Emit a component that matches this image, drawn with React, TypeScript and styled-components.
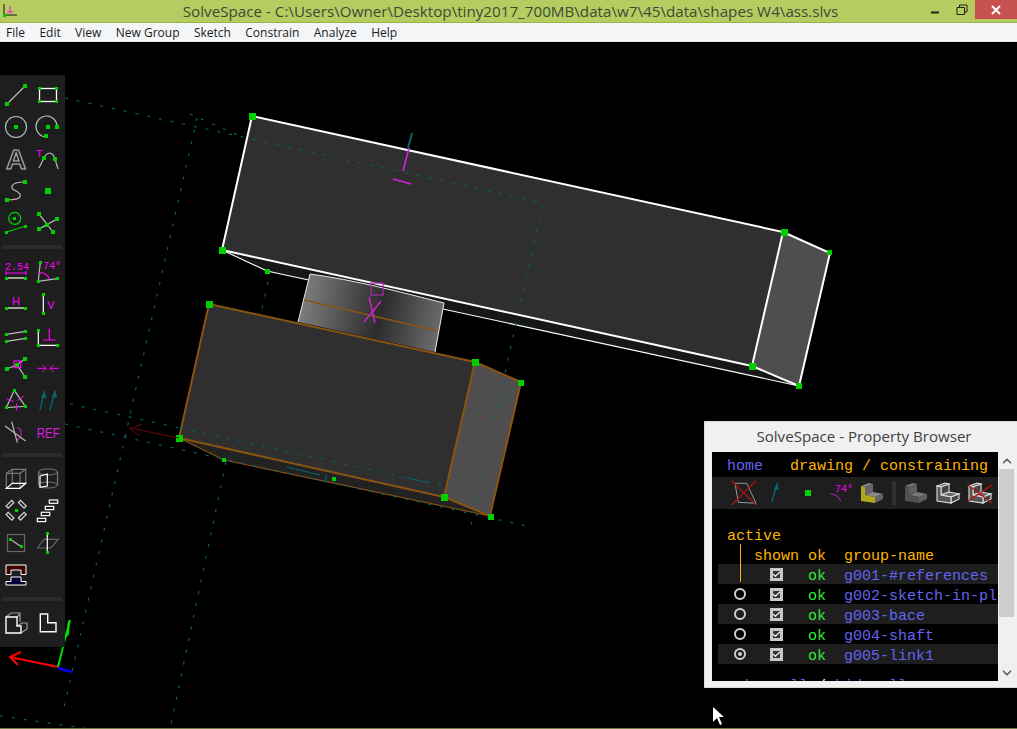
import * as React from 'react';
import styled, { createGlobalStyle } from 'styled-components';
import { ChevronDown, ChevronUp, Check } from 'lucide-react';

const GREEN = '#00d000';
const MAGENTA = '#ff00ff';
const TEAL = '#07666c';
const DASH = '#066064';
const GREY = '#b8b8b8';
const BROWN = '#8a5410';
const BLUE = '#6464f0';
const ORANGE = '#ffb400';

const GlobalStyle = createGlobalStyle`
  html, body {
    margin: 0;
    padding: 0;
    background: #000;
    overflow: hidden;
  }
`;

const Page = styled.div`
  width: 1017px;
  height: 729px;
  display: flex;
  flex-direction: column;
  overflow: hidden;
  background: #000;
`;

const TitleBar = styled.div`
  height: 22px;
  flex: none;
  display: grid;
  grid-template-columns: 1fr auto 1fr;
  background: #b6cc60;
  border-bottom: 1px solid #9db24e;
`;

const AppIcon = styled.svg`
  display: block;
  width: 20px;
  height: 22px;
`;

const Title = styled.div`
  padding-left: 4px;
  font: 15.2px/22px 'Open Sans', sans-serif;
  color: #3c4a38;
  white-space: nowrap;
`;

const WindowButtons = styled.div`
  display: flex;
  justify-content: flex-end;
  align-items: flex-start;
`;

const WindowButton = styled.div<{ $close?: boolean }>`
  width: ${(p) => (p.$close ? 42 : 27)}px;
  height: 19px;
  display: flex;
  align-items: center;
  justify-content: center;
  background: ${(p) => (p.$close ? '#c75050' : 'transparent')};
`;

const MenuBar = styled.div`
  height: 17px;
  flex: none;
  display: flex;
  gap: 14.4px;
  padding: 0 0 1px 6px;
  background: #f4f5f7;
  border-bottom: 1px solid #e6e6e6;
`;

const MenuItem = styled.span`
  font: 12px/19px 'Open Sans', sans-serif;
  color: #1c1c1c;
  white-space: nowrap;
`;

const Viewport = styled.div`
  position: relative;
  flex: 1;
  min-height: 0;
  overflow: hidden;
`;

const Scene = styled.svg`
  display: block;
  width: 100%;
  height: 100%;
`;

const BottomEdge = styled.div`
  height: 1px;
  flex: none;
  background: #6f7a48;
`;

const ToolPanel = styled.div`
  position: absolute;
  left: 0;
  top: 33px;
  width: 65px;
  padding: 4px 0 8px;
  background: #1e1e1e;
`;

const ToolGroup = styled.div<{ $tail?: number }>`
  display: grid;
  grid-template-columns: 32px 32px;
  grid-auto-rows: 32px;
  padding-bottom: ${(p) => p.$tail ?? 0}px;
`;

const ToolSeparator = styled.div<{ $tight?: boolean }>`
  height: 4px;
  margin: 6px 3px ${(p) => (p.$tight ? 5 : 6)}px;
  background: #2c2c2c;
`;

const IconCell = styled.svg.attrs({ viewBox: '0 0 32 32' })`
  display: block;
  width: 32px;
  height: 32px;
  flex: none;
  fill: none;
`;

const IconText = styled.text<{ $size?: number; $sans?: boolean; $dim?: boolean }>`
  font-family: ${(p) => (p.$sans ? "'Liberation Sans'" : "'Liberation Mono'")}, sans-serif;
  font-size: ${(p) => p.$size ?? 10}px;
  fill: ${(p) => (p.$dim ? '#d820d8' : MAGENTA)};
`;

const BrowserWindow = styled.div`
  position: absolute;
  left: 704px;
  top: 379px;
  width: 318px;
  height: 267px;
  box-sizing: border-box;
  padding: 0 5px 6px 7px;
  display: flex;
  flex-direction: column;
  background: #f0f0f0;
  border: 1px solid #d8d8d8;
`;

const BrowserTitle = styled.div`
  height: 30px;
  flex: none;
  text-align: center;
  font: 15.1px/29px 'Open Sans', sans-serif;
  color: #3f3f3f;
  white-space: nowrap;
`;

const BrowserClient = styled.div`
  flex: 1;
  min-height: 0;
  display: flex;
  background: #000;
`;

const BrowserPane = styled.div`
  flex: 1;
  min-width: 0;
  overflow: hidden;
  padding-top: 5px;
  font: 15px/20px 'Liberation Mono', monospace;
  white-space: pre;
`;

const NavRow = styled.div`
  height: 20px;
  padding-left: 15px;
  color: ${ORANGE};
`;

const Blue = styled.span`
  color: ${BLUE};
`;

const White = styled.span`
  color: #fff;
`;

const IconStrip = styled.div`
  height: 32px;
  padding-left: 16px;
  display: flex;
  align-items: center;
  background: #1e1e1e;
`;

const StripSeparator = styled.div`
  width: 4px;
  height: 24px;
  margin: 0 4px;
  background: #303030;
`;

const ActiveLabel = styled.div`
  height: 20px;
  box-sizing: border-box;
  margin-top: 15px;
  padding: 3px 0 0 15px;
  color: ${ORANGE};
`;

const GroupTable = styled.div`
  position: relative;
`;

const TreeLine = styled.div`
  position: absolute;
  left: 28px;
  top: 0;
  width: 1px;
  height: 38px;
  background: ${ORANGE};
`;

const GroupRow = styled.div<{ $striped?: boolean; $header?: boolean }>`
  height: 20px;
  margin-left: 6px;
  display: grid;
  grid-template-columns: 36px 54px 36px 1fr;
  grid-template-rows: 20px;
  align-items: start;
  background: ${(p) => (p.$striped ? '#1e1e1e' : 'transparent')};
  color: ${(p) => (p.$header ? ORANGE : BLUE)};
`;

const Cell = styled.div`
  padding-top: 3px;
`;

const OkCell = styled(Cell)`
  color: #33ee33;
`;

const RadioCell = styled.div`
  align-self: center;
  display: flex;
  justify-content: center;
  padding-left: 8px;
`;

const ShownCell = styled.div`
  align-self: center;
  display: flex;
  justify-content: center;
  padding-right: 10px;
`;

const Radio = styled.span<{ $on?: boolean }>`
  width: 12px;
  height: 12px;
  box-sizing: border-box;
  display: flex;
  align-items: center;
  justify-content: center;
  border: 2px solid #d0d0d0;
  border-radius: 50%;

  &::after {
    content: '';
    width: 4px;
    height: 4px;
    border-radius: 50%;
    background: ${(p) => (p.$on ? '#d0d0d0' : 'transparent')};
  }
`;

const CheckBox = styled.span`
  width: 13px;
  height: 13px;
  box-sizing: border-box;
  display: flex;
  align-items: center;
  justify-content: center;
  border: 3px solid #c8c8c8;
  background: #333;
  color: #f0f0f0;

  svg {
    flex: none;
  }
`;

const ShowHideRow = styled.div`
  margin-top: 13px;
  padding-left: 24px;
  color: ${BLUE};
`;

const ScrollBar = styled.div`
  width: 18px;
  flex: none;
  display: flex;
  flex-direction: column;
  background: #f0f0f0;
  color: #606060;
`;

const ScrollArrow = styled.div`
  height: 17px;
  flex: none;
  display: flex;
  align-items: center;
  justify-content: center;
`;

const ScrollThumb = styled.div`
  height: 148px;
  margin: 0 2px 0 1px;
  background: #cdcdcd;
`;

const ScrollRest = styled.div`
  flex: 1;
`;

const Dot = ({ x, y, s = 4 }: { x: number; y: number; s?: number }) => (
  <rect x={x - s / 2} y={y - s / 2} width={s} height={s} fill={GREEN} shapeRendering="crispEdges" />
);

const Seg = ({ d, c = GREY, w = 1.2 }: { d: string; c?: string; w?: number }) => (
  <path d={d} stroke={c} strokeWidth={w} fill="none" />
);

const toolIconsA = [
  <>
    <Seg d="M7 25L25 7" />
    <Dot x={7} y={25} />
    <Dot x={25} y={7} />
  </>,
  <>
    <rect x={7.5} y={9.5} width={17} height={13} stroke="#fff" strokeWidth={1.3} />
    <Dot x={7.5} y={9.5} s={3} />
    <Dot x={24.5} y={9.5} s={3} />
    <Dot x={7.5} y={22.5} s={3} />
    <Dot x={24.5} y={22.5} s={3} />
  </>,
  <>
    <circle cx={16} cy={16} r={10.5} stroke={GREY} strokeWidth={1.2} />
    <Dot x={16} y={16} />
  </>,
  <>
    <Seg d="M14 26A10.5 10.5 0 1 1 25 16" />
    <Dot x={16} y={16} />
    <Dot x={25} y={16} />
    <Dot x={14} y={25} />
  </>,
  <text x={16} y={26} textAnchor="middle" fontFamily="'Liberation Sans', sans-serif" fontWeight="bold" fontSize={28} fill="#1e1e1e" stroke={GREY} strokeWidth={1.1}>A</text>,
  <>
    <IconText x={4} y={14} $size={11}>T</IconText>
    <Seg d="M7 25L12 15C14 10 20 7 23 16L26 26" />
    <Dot x={12} y={15} />
    <Dot x={23} y={16} />
  </>,
  <>
    <Seg d="M7 25C14 25 22 24 20 19C18 15 10 16 12 11C13 8 20 7 25 7" />
    <Dot x={7} y={25} />
    <Dot x={25} y={7} />
  </>,
  <Dot x={16} y={16} s={6} />,
  <>
    <circle cx={14.7} cy={11.3} r={6} stroke={GREEN} strokeWidth={1.2} />
    <Seg d="M6.7 25L25.7 19" c={GREEN} />
    <Dot x={14.7} y={11.3} s={3} />
    <Dot x={6.7} y={25} s={3} />
    <Dot x={25.7} y={19} s={3} />
  </>,
  <>
    <Seg d="M7 7L21 25M7 22L25 12" c="#d0d0d0" />
    <Dot x={7} y={7} />
    <Dot x={25} y={12} />
    <Dot x={7} y={22} />
    <Dot x={21} y={25} />
    <Dot x={15} y={18} />
  </>,
];

const toolIconsB = [
  <>
    <IconText x={5} y={15.5} $size={10}>2.54</IconText>
    <Seg d="M6 17V21M6 19H26M26 17V21" c={MAGENTA} />
    <Seg d="M6 24H26" c="#fff" />
    <Dot x={6.3} y={24} s={3} />
    <Dot x={25.7} y={24} s={3} />
  </>,
  <>
    <Seg d="M8.3 8.3L6.3 27.3L25.3 24.7" />
    <Seg d="M7.3 18.7C12 18.7 16 21 17.3 25" c={MAGENTA} />
    <IconText x={11} y={15} $size={10}>74°</IconText>
    <Dot x={8.3} y={8.3} s={3} />
    <Dot x={6.3} y={27.3} s={3} />
    <Dot x={25.3} y={24.7} s={3} />
  </>,
  <>
    <IconText x={16} y={19} $size={11} $sans textAnchor="middle">H</IconText>
    <Seg d="M6 22H26" c="#fff" />
    <Dot x={6.3} y={22} s={3} />
    <Dot x={25.7} y={22} s={3} />
  </>,
  <>
    <Seg d="M11.3 8V27" c="#fff" />
    <IconText x={19} y={23} $size={11} $sans textAnchor="middle">V</IconText>
    <Dot x={11.3} y={8} s={3} />
    <Dot x={11.3} y={27} s={3} />
  </>,
  <>
    <Seg d="M6.3 16.3L25.7 13.3M6.3 23.3L25.7 20.3" />
    <Dot x={6.3} y={16.3} s={3} />
    <Dot x={25.7} y={13.3} s={3} />
    <Dot x={6.3} y={23.3} s={3} />
    <Dot x={25.7} y={20.3} s={3} />
  </>,
  <>
    <Seg d="M6.3 12.3V27.3H25.3" c="#fff" />
    <Seg d="M17.3 10.7V22M11.3 22H23.7" c={MAGENTA} />
    <Dot x={6.3} y={12.3} s={3} />
    <Dot x={6.3} y={27.3} s={3} />
    <Dot x={25.3} y={27.3} s={3} />
  </>,
  <>
    <Seg d="M7 19L17 14.7L25 9M17 14.7L25 27" />
    <rect x={14} y={11} width={6.7} height={6.7} stroke={MAGENTA} strokeWidth={1.2} />
    <Dot x={17} y={14.7} />
    <Dot x={7} y={19} />
    <Dot x={25} y={9} />
    <Dot x={25} y={27} />
  </>,
  <Seg d="M5 18.3H14M10.5 14.8L14 18.3L10.5 21.8M27 18.3H18M21.5 14.8L18 18.3L21.5 21.8" c={MAGENTA} w={1} />,
  <>
    <Seg d="M14.3 8.3L6.3 25.7L25.3 24.3Z" />
    <Seg d="M6.5 16.5L13.5 19.5M17.5 18.5L24 14M16.5 21.5V28.5" c={MAGENTA} w={1} />
    <Dot x={14.3} y={8.3} s={3} />
    <Dot x={6.3} y={25.7} s={3} />
    <Dot x={25.3} y={24.3} s={3} />
  </>,
  <>
    <Seg d="M8 28.3L12.3 9M18 28.3L23 8.3" c={TEAL} w={1.4} />
    <path d="M12.3 9L9 16H14.5ZM23 8.3L19.7 15.5H25.2Z" fill={TEAL} />
  </>,
  <>
    <Seg d="M17.3 13.7C22 14.5 23 23 17 26" c="#a020a0" w={1.4} />
    <Seg d="M5 12L25.7 27M11.7 7.7L17.3 28.7" />
  </>,
  <IconText x={4.7} y={23.7} $size={14} $sans $dim textLength={23} lengthAdjust="spacingAndGlyphs">REF</IconText>,
];

const toolIconsC = [
  <>
    <Seg d="M6.3 10.3V25.3M6.3 10.3H20V25.3M6.3 10.3L12.3 6.3H25.7V20.3L20 25.3M20 10.3L25.7 6.3M12.3 6.3V20.3" c="#777" />
    <path d="M6.3 25.3H20L25.7 20.3H12.3Z" stroke="#fff" strokeWidth={1.2} />
  </>,
  <>
    <ellipse cx={16} cy={9} rx={9.5} ry={3} stroke="#777" />
    <ellipse cx={16} cy={22} rx={9.5} ry={3} stroke="#777" />
    <Seg d="M6.5 9V22M25.5 9V22" c="#777" />
    <path d="M8 13L15.3 11V23L8 24.3Z" stroke="#fff" strokeWidth={1.2} />
  </>,
  <>
    <g stroke="#d8d8d8" strokeWidth={1.2}>
      <rect x={6} y={7.8} width={8} height={3} transform="rotate(-45 10 9.3)" />
      <rect x={18.3} y={7.8} width={8} height={3} transform="rotate(45 22.3 9.3)" />
      <rect x={6} y={19.8} width={8} height={3} transform="rotate(45 10 21.3)" />
      <rect x={18.3} y={19.8} width={8} height={3} transform="rotate(-45 22.3 21.3)" />
    </g>
    <Dot x={16.3} y={15.3} s={3} />
  </>,
  <g stroke="#fff" strokeWidth={1.2}>
    <rect x={17.3} y={5} width={8.4} height={3.3} />
    <rect x={13.3} y={11.3} width={8.4} height={3.3} />
    <rect x={9.3} y={17.3} width={8.4} height={3.3} />
    <rect x={5.3} y={23.3} width={8.4} height={3.3} />
  </g>,
  <>
    <rect x={7.5} y={7.5} width={17} height={17} stroke="#666" strokeWidth={1.2} />
    <Seg d="M10.3 12.3L21.3 19.7" />
    <Dot x={10.3} y={12.3} s={3} />
    <Dot x={21.3} y={19.7} s={3} />
  </>,
  <>
    <path d="M5.3 21L12 12.3H26.3L18.7 21Z" stroke="#666" strokeWidth={1.2} />
    <Seg d="M15.3 6.3V25.3" c="#fff" />
    <Dot x={15.3} y={6.3} s={3} />
    <Dot x={15.3} y={25.3} s={3} />
  </>,
  <>
    <path d="M6 6H26V15.5H21V11H11V15.5H6Z" fill="#400000" stroke="#fff" strokeWidth={1} />
    <path d="M11 18H21V22.5H26V26H6V22.5H11Z" fill="#000033" stroke="#fff" strokeWidth={1} />
  </>,
];

const toolIconsD = [
  <>
    <Seg d="M6 10L11 6H20V15M17 10L20 7M17 19L22 16H27V22L21 26M27 16V22" c="#999" />
    <path d="M6 10H17V19H21V26H6Z" stroke="#fff" strokeWidth={1.4} />
  </>,
  <path d="M8.3 7H15.7V15.7H24V24.7H8.3Z" stroke="#fff" strokeWidth={1.4} />,
];

interface ISolidIconProps {
  front: string;
  top: string;
  side: string;
  line?: string;
  crossed?: boolean;
}

const SolidIcon = ({ front, top, side, line, crossed }: ISolidIconProps) => (
  <IconCell>
    <g stroke={line} strokeWidth={1.1}>
      <path d="M5 9L13 6L17 7L9 10Z" fill={top} />
      <path d="M9 10L17 7V15L9 18Z" fill={side} />
      <path d="M9 18L17 15L27 17L19 20Z" fill={top} />
      <path d="M19 20L27 17V22L19 26Z" fill={side} />
      <path d="M5 9L9 10V18L19 20V26L5 24Z" fill={front} />
    </g>
    {crossed && <Seg d="M4 24L28 8M4 8L28 26" c="#b01818" w={1.4} />}
  </IconCell>
);

const Tools = ({ icons }: { icons: React.ReactNode[] }) => (
  <>
    {icons.map((icon, i) => (
      <IconCell key={i}>{icon}</IconCell>
    ))}
  </>
);

const dashedLines = [
  'M65 98L543 203L470 530',
  'M190 114L242 137',
  'M197 118L63 712',
  'M268 282L261 313',
  'M226 462L170 729',
  'M70 404L180 428',
  'M180 428L445 486',
  'M65 424L527 526',
  'M0 716L90 729',
];

const Workspace = () => (
  <Scene viewBox="0 42 1017 686">
    <defs>
      <linearGradient id="shaft" x1="305" y1="300" x2="442" y2="330" gradientUnits="userSpaceOnUse">
        <stop offset="0" stopColor="#7a7a7a" />
        <stop offset="0.55" stopColor="#2c2c2c" />
        <stop offset="1" stopColor="#6e6e6e" />
      </linearGradient>
    </defs>

    {/* big part */}
    <path d="M222 250L267 271L799 386L752 366Z" fill="#171717" />
    <path d="M252 116L783 232L752 366L222 250Z" fill="#2f2f2f" />
    <path d="M783 232L830 253L799 386L752 366Z" fill="#4e4e4e" />
    <g stroke="#fff" fill="none" strokeWidth={2}>
      <path d="M252 116L783 232L752 366L222 250Z" />
      <path d="M783 232L830 253L799 386L752 366" />
      <path d="M222 250L267 271L799 386" strokeWidth={1.1} />
    </g>

    {/* shaft */}
    <path d="M310 274C355 280 400 292 444 303L435 352L298 322Z" fill="url(#shaft)" />
    <path d="M310 274C355 280 400 292 444 303M310 274L298 322M444 303L435 352" stroke="#e8e8e8" fill="none" />

    {/* small part */}
    <path d="M179 438L224 460L490 516L444 497Z" fill="#222" />
    <path d="M209 304L475 362L444 497L179 438Z" fill="#2f2f2f" />
    <path d="M475 362L521 382L490 516L444 497Z" fill="#4e4e4e" />
    <g stroke={BROWN} fill="none" strokeWidth={2}>
      <path d="M209 304L475 362L444 497L179 438Z" />
      <path d="M475 362L521 382L490 516L444 497" />
      <path d="M179 438L224 460L490 516" strokeWidth={1.1} />
      <path d="M304 300L438 331" strokeWidth={1.3} />
    </g>

    {/* construction lines */}
    <g stroke={DASH} strokeWidth={1.2} strokeDasharray="3 9" fill="none">
      {dashedLines.map((d) => (
        <path key={d} d={d} />
      ))}
    </g>
    <g stroke={TEAL} fill="none">
      <path d="M287 467L320 475M407 478L430 483M326 474V482" />
      <path d="M408 148L412 133" strokeWidth={2} />
    </g>

    {/* constraints */}
    <g stroke="#d820d8" fill="none" strokeWidth={1.3}>
      <path d="M409 148L403 171M393 179L411 184" strokeWidth={1.7} />
      <rect x={371} y={283} width={12} height={12} stroke="#a828a8" />
      <path d="M369 297L375 323M381 301L364 322" />
    </g>

    {/* points */}
    <g>
      <Dot x={252.5} y={116} s={7} />
      <Dot x={784} y={232} s={7} />
      <Dot x={752.5} y={366} s={7} />
      <Dot x={222} y={250} s={7} />
      <Dot x={829.5} y={252.5} s={5} />
      <Dot x={798.5} y={386} s={6} />
      <Dot x={267.5} y={271.5} s={5} />
      <Dot x={209.5} y={304.5} s={7} />
      <Dot x={475.5} y={362.5} s={7} />
      <Dot x={444.5} y={497.5} s={7} />
      <Dot x={179.5} y={438.5} s={7} />
      <Dot x={521} y={382.5} s={6} />
      <Dot x={490.5} y={516.5} s={6} />
      <Dot x={224} y={460} s={4} />
      <Dot x={334} y={479} s={4} />
    </g>

    {/* datum axes near the part and the corner triad */}
    <path d="M130 428L179 438M130 429L142 424M130 429L140 436" stroke="#6a0808" fill="none" />
    <path d="M58 667L10 657M21 652L10 657L18 665" stroke="#ff0000" strokeWidth={2} fill="none" />
    <path d="M58 667L66 635L70 620" stroke="#00e000" strokeWidth={2} fill="none" />
    <path d="M66 638L68 621L70 620L69 634Z" fill="#00e000" />
    <path d="M58 668L72 672" stroke="#0000f0" strokeWidth={2.5} />

    {/* mouse pointer */}
    <path d="M713 707V722L717 718L720 725L722 724L719 717H724Z" fill="#fff" />
  </Scene>
);

const groups = [
  { name: 'g001-#references', radio: false },
  { name: 'g002-sketch-in-pl', radio: true },
  { name: 'g003-bace', radio: true },
  { name: 'g004-shaft', radio: true },
  { name: 'g005-link1', radio: true, on: true },
];

const menus = ['File', 'Edit', 'View', 'New Group', 'Sketch', 'Constrain', 'Analyze', 'Help'];

const PropertyBrowser = () => (
  <BrowserWindow>
    <BrowserTitle>SolveSpace - Property Browser</BrowserTitle>
    <BrowserClient>
      <BrowserPane>
        <NavRow><Blue>home</Blue>{'   drawing / constraining'}</NavRow>
        <IconStrip>
          <IconCell>
            <path d="M7 6.3H18.7L28 26.3L10.3 25.3Z" stroke="#999" />
            <Seg d="M3.7 3.7L28 28M3.7 28L28 3.7" c="#a81414" w={1.3} />
          </IconCell>
          <IconCell>
            <Seg d="M11.7 25.3L17.3 6.3" c={TEAL} w={1.4} />
            <path d="M17.5 5.5L13.5 13H18.5Z" fill={TEAL} />
          </IconCell>
          <IconCell><Dot x={15.7} y={15.7} s={6} /></IconCell>
          <IconCell>
            <IconText x={11} y={15} $size={10}>74°</IconText>
            <Seg d="M6 17C11 17 16 20 16.7 24.7" c="#a020a0" />
          </IconCell>
          <SolidIcon front="#b0a818" top="#8a8a8a" side="#666" />
          <StripSeparator />
          <SolidIcon front="#505050" top="#777" side="#5e5e5e" />
          <SolidIcon front="#555" top="#666" side="#444" line="#e0e0e0" />
          <SolidIcon front="#555" top="#666" side="#444" line="#e0e0e0" crossed />
        </IconStrip>
        <ActiveLabel>active</ActiveLabel>
        <GroupTable>
          <GroupRow $header>
            <Cell />
            <Cell>shown</Cell>
            <Cell>ok</Cell>
            <Cell>group-name</Cell>
          </GroupRow>
          {groups.map((g, i) => (
            <GroupRow key={g.name} $striped={i % 2 === 0}>
              <RadioCell>{g.radio && <Radio $on={g.on} />}</RadioCell>
              <ShownCell>
                <CheckBox><Check size={9} strokeWidth={3.5} /></CheckBox>
              </ShownCell>
              <OkCell>ok</OkCell>
              <Cell>{g.name}</Cell>
            </GroupRow>
          ))}
          <TreeLine />
        </GroupTable>
        <ShowHideRow>show all <White>/</White> hide all</ShowHideRow>
      </BrowserPane>
      <ScrollBar>
        <ScrollArrow><ChevronUp size={14} strokeWidth={3} /></ScrollArrow>
        <ScrollThumb />
        <ScrollRest />
        <ScrollArrow><ChevronDown size={14} strokeWidth={3} /></ScrollArrow>
      </ScrollBar>
    </BrowserClient>
  </BrowserWindow>
);

export default function App() {
  return (
    <Page>
      <GlobalStyle />
      <TitleBar>
        <AppIcon viewBox="0 0 20 22">
          <path d="M4 4V17M4 15H17" stroke="#111" fill="none" />
          <path d="M10 6V12M7 12H13" stroke={MAGENTA} fill="none" />
          <rect x={3} y={14} width={3} height={3} fill={GREEN} />
        </AppIcon>
        <Title>SolveSpace - C:\Users\Owner\Desktop\tiny2017_700MB\data\w7\45\data\shapes W4\ass.slvs</Title>
        <WindowButtons>
          <WindowButton>
            <svg width="10" height="10" viewBox="0 0 10 10"><path d="M1 7.5H9" stroke="#1c2410" strokeWidth="2" /></svg>
          </WindowButton>
          <WindowButton>
            <svg width="12" height="12" viewBox="0 0 12 12" fill="none" stroke="#1c2410"><path d="M3.5 3V1H11V8H9M1 3.5H8.5V10.5H1Z" /></svg>
          </WindowButton>
          <WindowButton $close>
            <svg width="10" height="10" viewBox="0 0 10 10"><path d="M1 1L9 9M9 1L1 9" stroke="#fff" strokeWidth="2" /></svg>
          </WindowButton>
        </WindowButtons>
      </TitleBar>
      <MenuBar>
        {menus.map((m) => (
          <MenuItem key={m}>{m}</MenuItem>
        ))}
      </MenuBar>
      <Viewport>
        <Workspace />
        <ToolPanel>
          <ToolGroup><Tools icons={toolIconsA} /></ToolGroup>
          <ToolSeparator $tight />
          <ToolGroup $tail={1}><Tools icons={toolIconsB} /></ToolGroup>
          <ToolSeparator />
          <ToolGroup><Tools icons={toolIconsC} /></ToolGroup>
          <ToolSeparator />
          <ToolGroup><Tools icons={toolIconsD} /></ToolGroup>
        </ToolPanel>
        <PropertyBrowser />
      </Viewport>
      <BottomEdge />
    </Page>
  );
}
